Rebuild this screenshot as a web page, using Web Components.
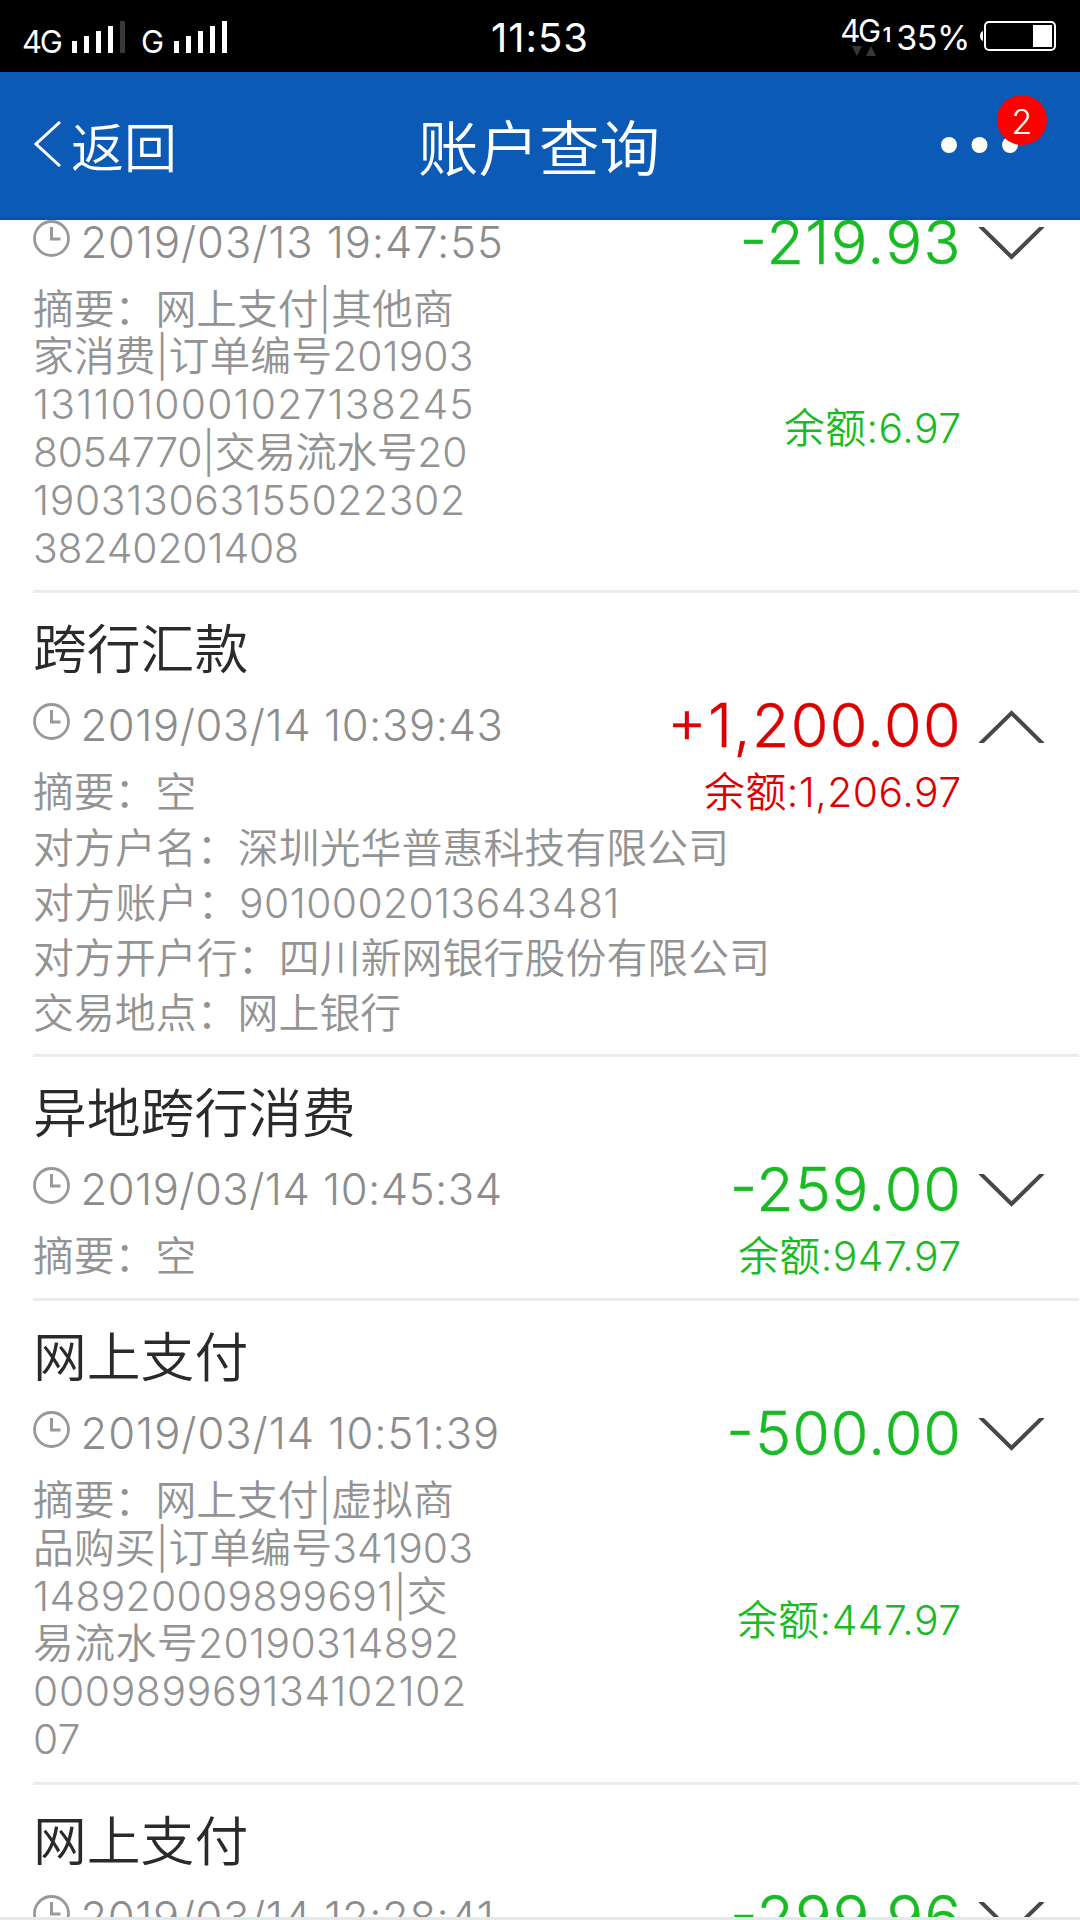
<!DOCTYPE html>
<html lang="zh-CN">
<head>
<meta charset="utf-8">
<title>账户查询</title>
<style>
html,body{margin:0;background:#fff}
body{width:1080px;height:1920px;overflow:hidden;font-family:Inter,"Noto Sans CJK SC",sans-serif;font-weight:300}
</style>
</head>
<body>
<bank-screen>
  <status-bar slot="status"></status-bar>
  <nav-header slot="header" back="返回" badge="2">账户查询</nav-header>
  <txn-item class="first" time="2019/03/13 19:47:55" amount="-219.93" balance="6.97" style="--time-ls:.92px;--amount-ls:1.4px">
    <text-line slot="summary">摘要：网上支付|其他商</text-line>
    <text-line slot="summary" ls=".1">家消费|订单编号201903</text-line>
    <text-line slot="summary" ls="1.2">131101000102713&#56;245</text-line>
    <text-line slot="summary" ls="-.26">8054770|交易流水号20</text-line>
    <text-line slot="summary" ls=".68">190313063155022302</text-line>
    <text-line slot="summary" ls="-.1">38240201408</text-line>
  </txn-item>
  <txn-item open time="2019/03/14 10:39:43" amount="+1,200.00" balance="1,206.97" style="--time-ls:.58px;--amount-ls:1.3px">
    <span slot="title">跨行汇款</span>
    <text-line slot="summary">摘要：空</text-line>
    <text-line slot="detail" ls=".15">对方户名：深圳光华普惠科技有限公司</text-line>
    <text-line slot="detail" ls=".42">对方账户：9010002013643481</text-line>
    <text-line slot="detail" ls=".16">对方开户行：四川新网银行股份有限公司</text-line>
    <text-line slot="detail" ls=".12">交易地点：网上银行</text-line>
  </txn-item>
  <txn-item time="2019/03/14 10:45:34" amount="-259.00" balance="947.97" style="--time-ls:.5px">
    <span slot="title">异地跨行消费</span>
    <text-line slot="summary">摘要：空</text-line>
  </txn-item>
  <txn-item time="2019/03/14 10:51:39" amount="-500.00" balance="447.97" style="--time-ls:.98px">
    <span slot="title">网上支付</span>
    <text-line slot="summary">摘要：网上支付|虚拟商</text-line>
    <text-line slot="summary" ls=".1">品购买|订单编号341903</text-line>
    <text-line slot="summary" ls=".34">148920009899&#54;91|交</text-line>
    <text-line slot="summary" ls=".43">易流水号20190314892</text-line>
    <text-line slot="summary" ls=".68">000989969134102102</text-line>
    <text-line slot="summary">07</text-line>
  </txn-item>
  <txn-item time="2019/03/14 12:28:41" amount="-299.96" style="--time-ls:.6px">
    <span slot="title">网上支付</span>
  </txn-item>
</bank-screen>
<script>
const define = (name, html, setup) => customElements.define(name, class extends HTMLElement {
  connectedCallback() {
    if (this.shadowRoot) return;
    const t = document.createElement('template');
    t.innerHTML = html;
    this.attachShadow({mode: 'open'}).append(t.content.cloneNode(true));
    if (setup) setup(this, this.shadowRoot);
  }
});

define('bank-screen', `
<style>
:host{display:flex;flex-direction:column;width:1080px;height:1920px;background:#fff}
main{flex:1;min-height:0;overflow:hidden;border-bottom:3px solid #e3e9ed}
</style>
<slot name="status"></slot><slot name="header"></slot><main><slot></slot></main>`);

define('signal-bars', `
<style>:host{display:block;width:53px;height:32px}svg{display:block}rect{fill:#fff}:host([level="4"]) rect:last-child{fill:#383838}</style>
<svg width="53" height="32"><rect x="0" y="20" width="5" height="12"/><rect x="12" y="15" width="5" height="17"/><rect x="24" y="10" width="5" height="22"/><rect x="36" y="5" width="5" height="27"/><rect x="48" y="0" width="5" height="32"/></svg>`);

define('battery-icon', `
<style>:host{display:block}svg{display:block}</style>
<svg width="78" height="30"><path d="M4 10 Q1 11 1 15 Q1 19 4 20Z" fill="#fff"/><rect x="6" y="1" width="70" height="28" rx="4" fill="none" stroke="#fff" stroke-width="2"/><rect x="54" y="4" width="19" height="22" fill="#fff"/></svg>`);

define('status-bar', `
<style>
:host{display:grid;grid-template-columns:1fr auto 1fr;height:72px;background:#000;color:#fff;font-weight:400;flex:none}
.l,.r{display:flex;align-items:flex-start}
.l{padding:21px 0 0 22px}
.net{font-size:31px;line-height:42px;letter-spacing:-2.4px}
.l .net{width:50px}
.l .net.g{width:33px;margin-left:16px}
.t{font-size:40px;line-height:76px;letter-spacing:1px}
.r{justify-content:flex-end;padding:21px 23px 0 0}
.cell{display:flex;flex-direction:column;margin-top:-11px;margin-right:5px}
.cell div{display:flex;align-items:baseline}
.cell small{font-size:20px;margin-left:4px;font-weight:600}
.cell svg{margin:-6px 0 0 12px}
.pct{font-size:34px;line-height:34px;margin-right:9px;letter-spacing:-.4px}
</style>
<div class="l"><span class="net">4G</span><signal-bars level="4"></signal-bars><span class="net g">G</span><signal-bars></signal-bars></div>
<div class="t">11:53</div>
<div class="r"><div class="cell"><div><span class="net">4G</span><small>1</small></div><svg width="25" height="10"><path d="M0 0H10L5 10ZM14 10H24L19 0Z" fill="#383838"/></svg></div><span class="pct">35%</span><battery-icon></battery-icon></div>`);

define('nav-header', `
<style>
:host{display:grid;grid-template-columns:1fr auto 1fr;align-items:center;height:148px;background:linear-gradient(#0a5ab6 0 144px,#0551ad 148px);color:#fff;flex:none;font-weight:350}
.back{display:flex;align-items:center;padding-left:33px;font-size:53px;line-height:60px;gap:10px}
.back svg{margin-top:-4px}
.back span{margin-top:6px}
h1{margin:6px 2px 0 0;font-size:60.5px;line-height:70px;font-weight:inherit}
.more{justify-self:end;position:relative;margin:-3px 62px 0 0;width:77px;height:16px}
.more svg{display:block}
.badge{position:absolute;left:56px;top:-42px;width:50px;height:50px;border-radius:50%;background:#f00;font-size:34px;line-height:53px;text-align:center}
</style>
<div class="back"><svg width="28" height="46"><path d="M27 1 3 23 27 45" fill="none" stroke="#fff" stroke-width="3"/></svg><span></span></div>
<h1><slot></slot></h1>
<div class="more"><svg width="77" height="16" fill="#fffff8"><circle cx="8" cy="8" r="8"/><circle cx="38.5" cy="8" r="8"/><circle cx="69" cy="8" r="8"/></svg><div class="badge"></div></div>`,
(el, r) => { r.querySelector('.back span').textContent = el.getAttribute('back'); r.querySelector('.badge').textContent = el.getAttribute('badge'); });

define('clock-icon', `
<style>:host{display:block;width:37px;height:37px}svg{display:block}</style>
<svg width="37" height="37" fill="none" stroke="#999"><circle cx="18.5" cy="18.5" r="17" stroke-width="2.8"/><path d="M18.500 7V19H27.500" stroke-width="3"/></svg>`);

define('text-line', `<style>:host{display:block;white-space:nowrap}</style><slot></slot>`,
(el) => { if (el.hasAttribute('ls')) el.style.letterSpacing = el.getAttribute('ls') + 'px'; });

define('txn-item', `
<style>
:host{display:block;margin-left:33px;padding-top:27px;font-weight:350;--tone:#18bb22}
:host(.first){margin-top:-110px}
:host([open]){--tone:#dc0000}
.title{font-size:53.8px;line-height:60px;color:#2a2a2a;height:60px}
.row{display:flex;align-items:center}
.when{height:60px;margin-top:15px;font-weight:300}
clock-icon{margin:-7px 10.5px 0 0}
.time{flex:1;font-size:43.5px;color:#8c8c8c;line-height:60px;white-space:nowrap;letter-spacing:var(--time-ls,0)}
.amount{font-size:61px;line-height:60px;color:var(--tone);-webkit-text-stroke:.4px var(--tone);white-space:nowrap;font-feature-settings:"case";letter-spacing:var(--amount-ls,1px)}
.chev{display:block;margin:3px 35px 0 16px}
:host([open]) .chev{transform:rotate(180deg)}
.info{margin-top:13.5px;justify-content:space-between;font-size:40.8px;line-height:47.9px;color:#939393;padding-right:118.5px;white-space:nowrap}
.balance{color:var(--tone);text-align:right;letter-spacing:.5px}
.detail{display:block;font-size:40.8px;line-height:55px;color:#939393}
:host([open]) .detail{margin:4.500px 0 -4.500px}
.line{height:3px;background:#e8ecec;margin:17.5px 1px 0 0}
</style>
<div class="title"><slot name="title"></slot></div>
<div class="row when"><clock-icon></clock-icon><span class="time"></span><span class="amount"></span><svg class="chev" width="67" height="33"><path d="M2 -1 33.500 30 65 -1" fill="none" stroke="#484848" stroke-width="4"/></svg></div>
<div class="row info"><div><slot name="summary"></slot></div><div class="balance"></div></div>
<div class="detail"><slot name="detail"></slot></div>
<div class="line"></div>`,
(el, r) => {
  r.querySelector('.time').textContent = el.getAttribute('time');
  r.querySelector('.amount').textContent = el.getAttribute('amount');
  if (el.hasAttribute('balance')) r.querySelector('.balance').textContent = '余额:' + el.getAttribute('balance');
});
</script>
</body>
</html>
